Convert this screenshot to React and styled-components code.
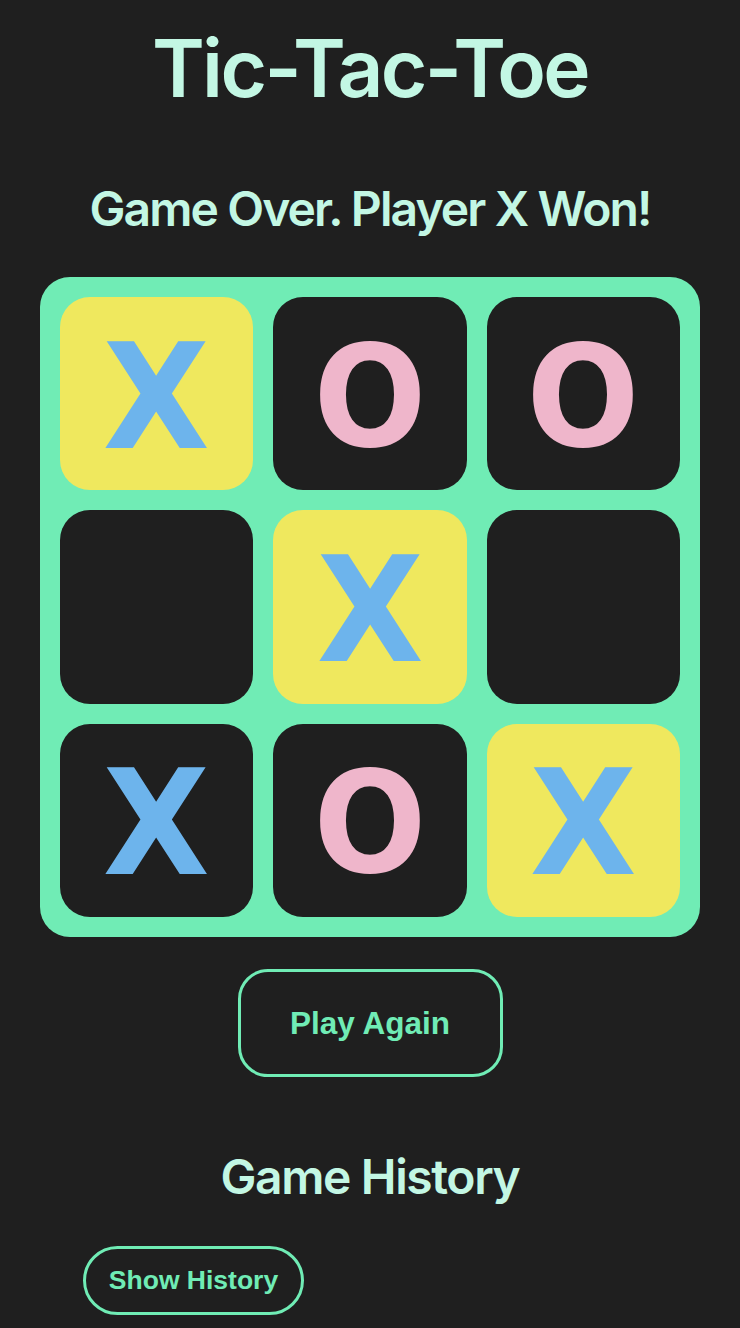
import React from "react";
import styled, { createGlobalStyle } from "styled-components";

const GlobalStyle = createGlobalStyle`
  html, body {
    margin: 0;
    padding: 0;
    background: #1f1f1f;
  }
  body {
    font-family: Inter, "Noto Sans", sans-serif;
  }
`;

const Page = styled.main`
  width: 740px;
  min-height: 1328px;
  box-sizing: border-box;
  padding-top: 22px;
  display: flex;
  flex-direction: column;
  align-items: center;
  background: #1f1f1f;
`;

const Title = styled.h1`
  margin: 0;
  font-family: Inter, "Noto Sans", sans-serif;
  font-weight: 600;
  font-size: 80px;
  line-height: 92px;
  color: #c3f7e4;
  letter-spacing: -2.6px;
`;

const Status = styled.h2`
  margin: 67px 0 0;
  font-family: Inter, "Noto Sans", sans-serif;
  font-weight: 600;
  font-size: 48px;
  line-height: 56px;
  color: #c3f7e4;
  letter-spacing: -1.9px;
`;

const Board = styled.div`
  margin-top: 40px;
  width: 660px;
  height: 660px;
  box-sizing: border-box;
  padding: 20px;
  border-radius: 30px;
  background: #70ecb5;
  display: grid;
  grid-template-columns: repeat(3, 1fr);
  grid-template-rows: repeat(3, 1fr);
  gap: 20px;
`;

const Cell = styled.button`
  border: none;
  padding: 0;
  border-radius: 30px;
  background: ${(p) => (p.$win ? "#efe85e" : "#1f1f1f")};
  display: flex;
  align-items: center;
  justify-content: center;
  font-family: "DejaVu Sans", "Noto Sans", sans-serif;
  font-weight: 700;
  font-size: 146px;
  line-height: 1;
  color: ${(p) => (p.$mark === "X" ? "#6db4ec" : "#efb6cb")};
  cursor: pointer;
`;

const Mark = styled.span`
  display: block;
  transform: translateY(3px)
    ${(p) => (p.$mark === "X" ? "scale(0.95, 1)" : "scale(0.91, 0.96)")};
`;

const PlayButton = styled.button`
  margin-top: 32px;
  width: 265px;
  height: 108px;
  box-sizing: border-box;
  border: 3px solid #70ecb5;
  border-radius: 30px;
  background: transparent;
  color: #70ecb5;
  font-family: "Liberation Sans", Arial, sans-serif;
  font-weight: 700;
  font-size: 31.5px;
  cursor: pointer;
`;

const History = styled.section`
  align-self: stretch;
  margin-top: 72px;
  display: flex;
  flex-direction: column;
  align-items: center;
`;

const HistoryTitle = styled.h2`
  margin: 0;
  font-family: Inter, "Noto Sans", sans-serif;
  font-weight: 600;
  font-size: 48px;
  line-height: 56px;
  color: #c3f7e4;
  letter-spacing: -1.4px;
`;

const ShowButton = styled.button`
  align-self: flex-start;
  margin: 41px 0 0 83px;
  width: 221px;
  height: 69px;
  box-sizing: border-box;
  border: 3px solid #70ecb5;
  border-radius: 35px;
  background: transparent;
  color: #70ecb5;
  font-family: "Liberation Sans", Arial, sans-serif;
  font-weight: 700;
  font-size: 26.5px;
  cursor: pointer;
`;

const board = ["X", "O", "O", null, "X", null, "X", "O", "X"];
const winLine = [0, 4, 8];

export default function App() {
  return (
    <>
      <GlobalStyle />
      <Page>
        <Title>Tic-Tac-Toe</Title>
        <Status>Game Over. Player X Won!</Status>
        <Board>
          {board.map((v, i) => (
            <Cell key={i} $mark={v} $win={winLine.includes(i)}>
              {v && <Mark $mark={v}>{v}</Mark>}
            </Cell>
          ))}
        </Board>
        <PlayButton>Play Again</PlayButton>
        <History>
          <HistoryTitle>Game History</HistoryTitle>
          <ShowButton>Show History</ShowButton>
        </History>
      </Page>
    </>
  );
}
